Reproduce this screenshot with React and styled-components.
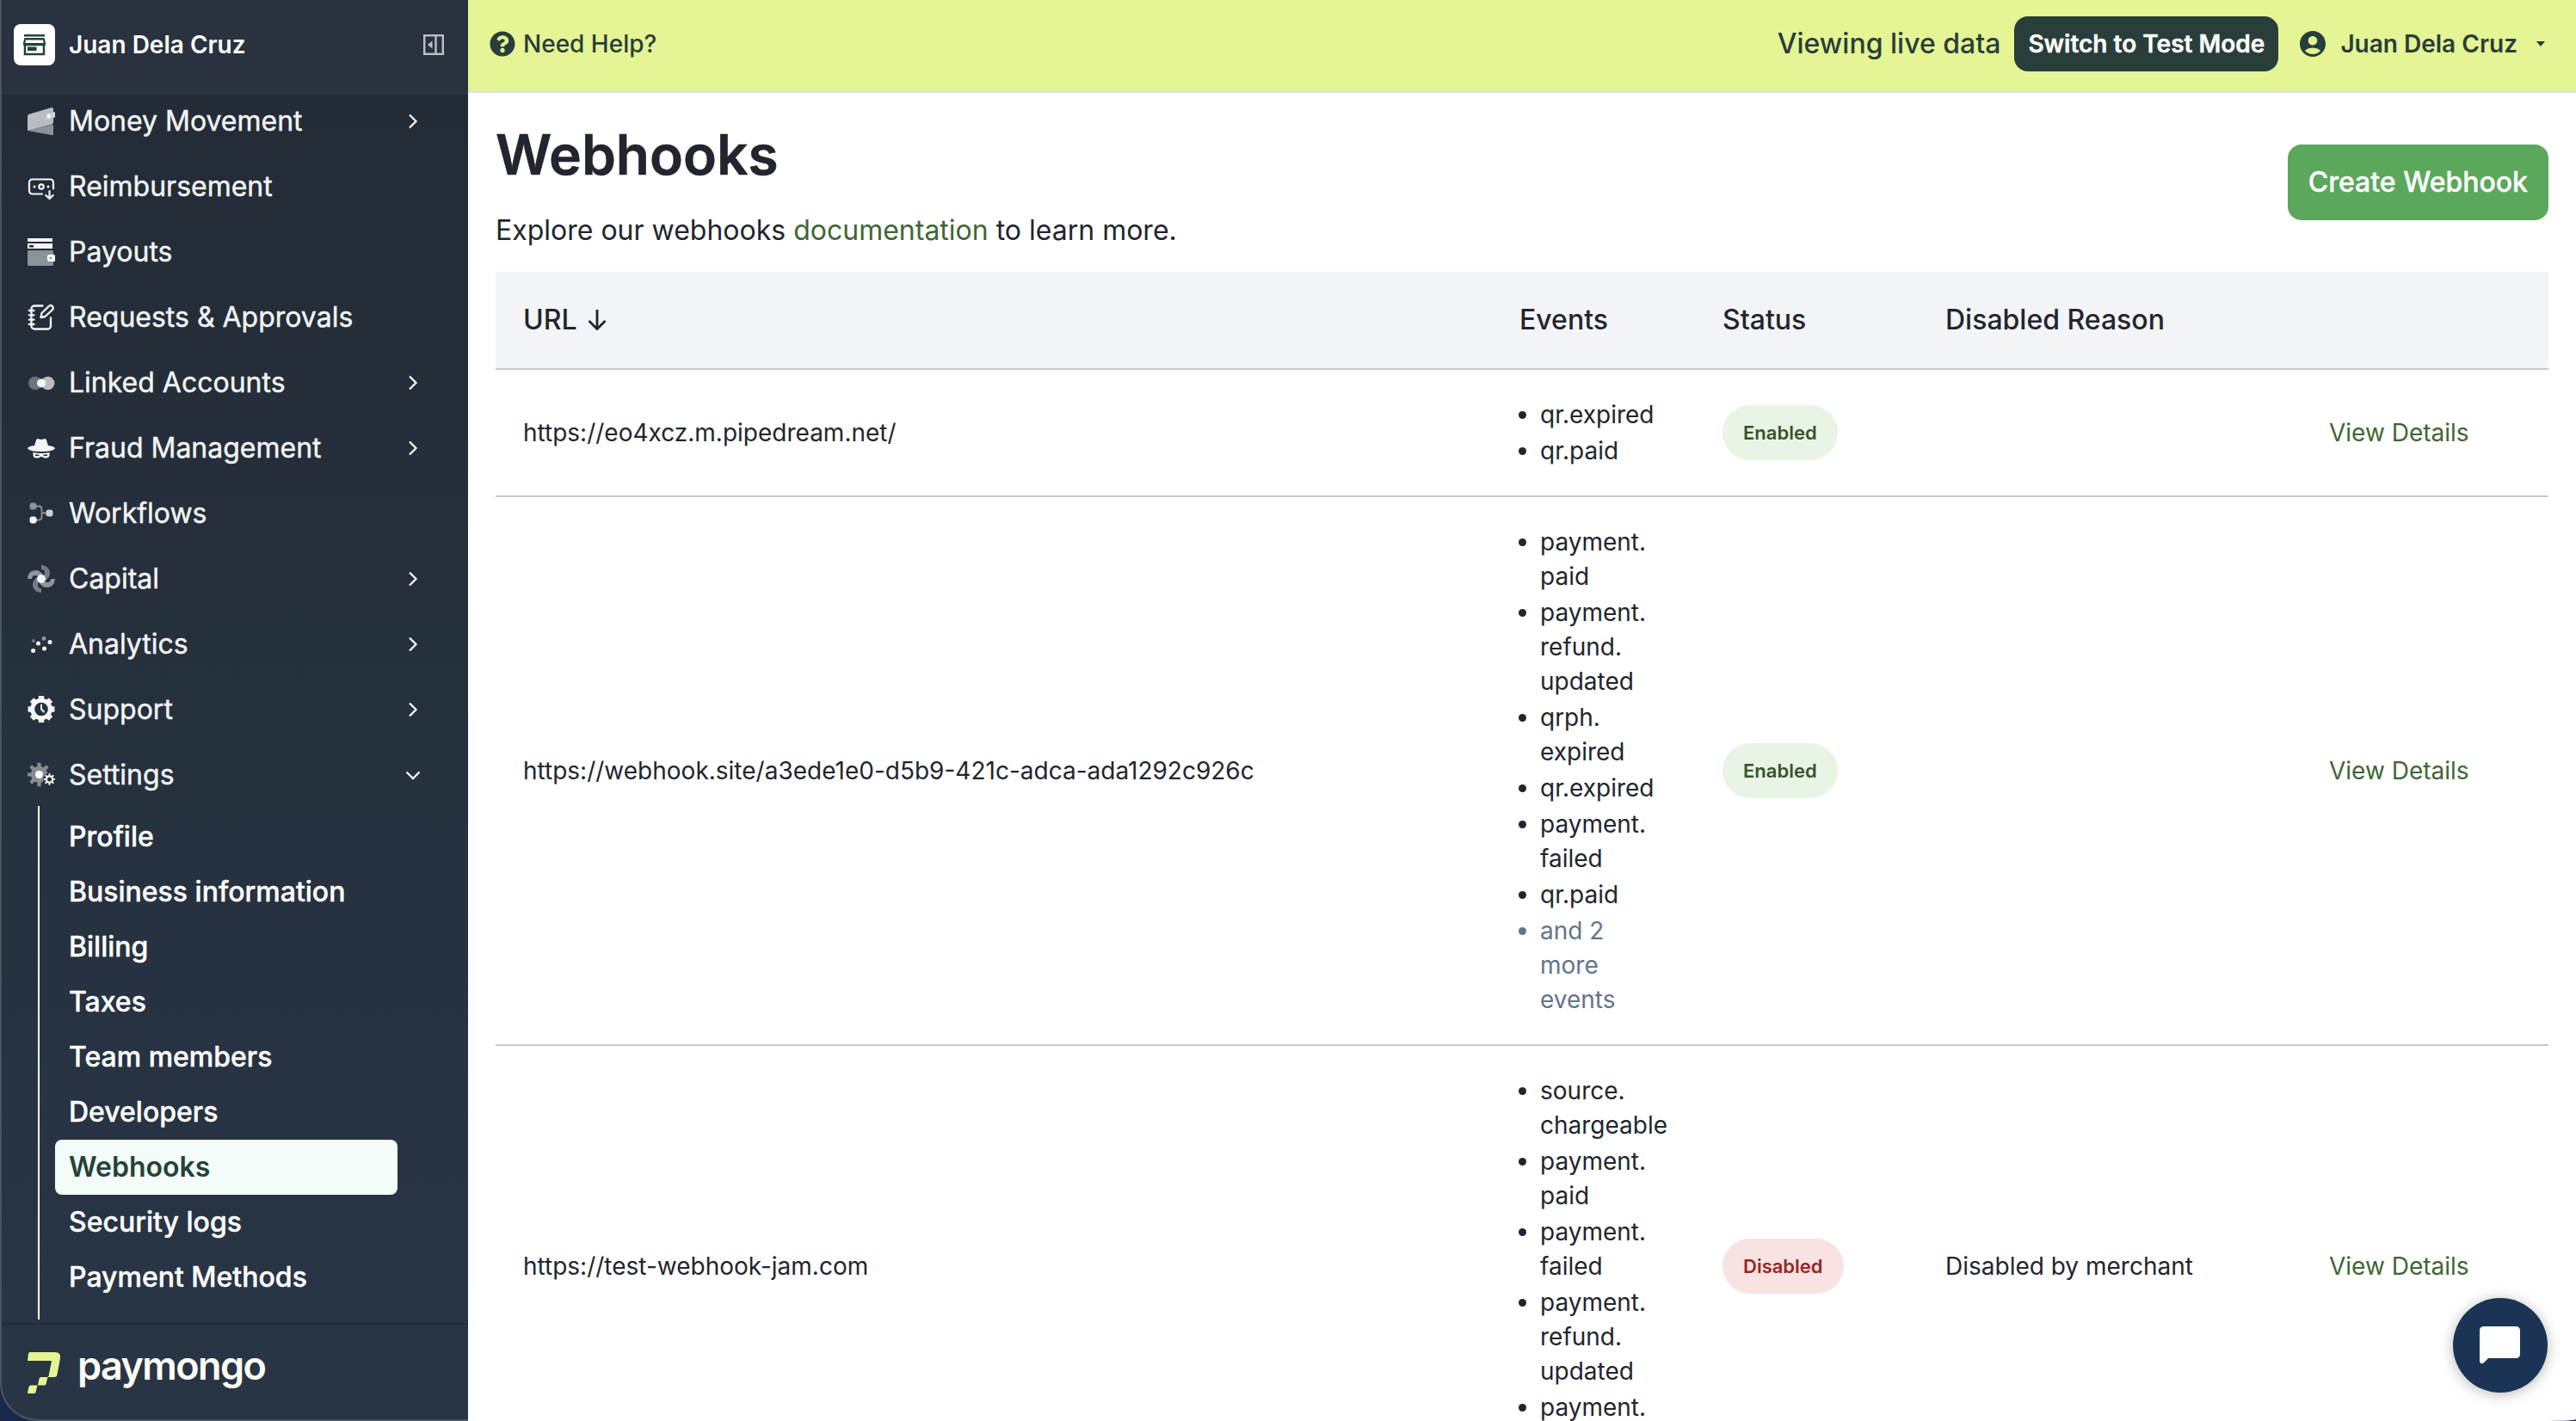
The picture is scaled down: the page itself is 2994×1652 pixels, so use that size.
import React from "react";
import styled, { createGlobalStyle, css } from "styled-components";
import { FaQuestionCircle } from "react-icons/fa";
import { MdAccountCircle } from "react-icons/md";

const GlobalStyle = createGlobalStyle`
  * {
    box-sizing: border-box;
  }
  body {
    margin: 0;
    overflow: hidden;
    background: #17284b;
    color: #22252d;
    font-family: "Inter", "Liberation Sans", sans-serif;
    font-size: 28px;
    line-height: 40px;
  }
`;

const Page = styled.div`
  display: flex;
  width: 2994px;
  height: 1652px;
  overflow: hidden;
`;

/* sidebar */

const Sidebar = styled.aside`
  display: flex;
  flex-direction: column;
  flex: none;
  width: 544px;
  background: linear-gradient(#232c36 110px, #283545 1540px);
  border-left: 2px solid #4a545f;
  border-bottom: 2px solid #4a5661;
  border-bottom-left-radius: 44px;
  overflow: hidden;
`;

const SidebarHeader = styled.div`
  display: flex;
  align-items: center;
  flex: none;
  height: 110px;
  padding: 0 28px 4px 14px;
  background: #29323e;
  border-bottom: 2px solid #2e3844;
  z-index: 1;
`;

const StoreBadge = styled.div`
  display: flex;
  align-items: center;
  justify-content: center;
  width: 48px;
  height: 48px;
  border-radius: 8px;
  background: #fff;
`;

const AccountName = styled.div`
  flex: 1;
  margin-left: 16px;
  color: #fff;
  font-weight: 600;
`;

const Nav = styled.nav`
  flex: 1;
  min-height: 0;
  margin-top: -7px;
`;

const NavRow = styled.div`
  display: flex;
  align-items: center;
  height: 76px;
  padding: 0 54px 0 30px;
  color: #f4f5f7;
  font-size: 32px;
  font-weight: 400;
  -webkit-text-stroke: 0.4px #f4f5f7;
`;

const NavLabel = styled.span`
  flex: 1;
  margin-left: 16px;
`;

const SubNav = styled.div`
  height: 597px;
  margin: -2px 82px 0 42px;
  padding: 4px 0 0 18px;
  border-left: 2px solid #fff;
`;

const SubNavItem = styled.div`
  height: 64px;
  padding: 0 16px;
  border-radius: 8px;
  color: #fff;
  font-size: 32px;
  font-weight: 500;
  line-height: 64px;
  -webkit-text-stroke: 0.4px #fff;
  ${(props) =>
    props.$active &&
    css`
      background: #f3fcf8;
      color: #23423a;
      font-weight: 600;
      -webkit-text-stroke: 0;
    `}
`;

const SidebarFooter = styled.div`
  display: flex;
  flex: none;
  height: 112px;
  padding: 32px 0 0 30px;
  border-top: 2px solid #212a34;
`;

const Wordmark = styled.span`
  margin: -6px 0 0 19px;
  color: #fffdf6;
  font-size: 45px;
  font-weight: 600;
  line-height: 44px;
  letter-spacing: -1.6px;
`;

/* main area */

const Main = styled.main`
  flex: 1;
  min-width: 0;
  background: #fff;
  border-bottom-right-radius: 32px 2px;
  overflow: hidden;
`;

const TopBar = styled.header`
  display: flex;
  align-items: center;
  height: 108px;
  padding: 0 36px 4px 25px;
  background: #e5f494;
  border-bottom: 2px solid #dce2ea;
  color: #283e3a;
`;

const Help = styled.div`
  display: flex;
  align-items: center;
  gap: 9px;
  flex: 1;
  font-weight: 500;
`;

const LiveLabel = styled.span`
  font-size: 32px;
  font-weight: 500;
`;

const ModeButton = styled.button`
  height: 64px;
  margin: 0 22px 0 16px;
  padding: 0 16px;
  border: none;
  border-radius: 16px;
  background: #283e3a;
  color: #fff;
  font: inherit;
  font-weight: 600;
  -webkit-text-stroke: 0.4px #fff;
`;

const UserMenu = styled.div`
  display: flex;
  align-items: center;
  font-weight: 600;

  span {
    margin: 0 22px 0 14px;
  }
`;

const Content = styled.div`
  padding: 0 32px;
`;

const PageHead = styled.div`
  display: flex;
  justify-content: space-between;
  align-items: flex-start;
  height: 208px;
`;

const Title = styled.h1`
  margin: 32px 0 0;
  font-size: 64px;
  font-weight: 600;
  line-height: 80px;
  -webkit-text-stroke: 0.6px #22252d;
`;

const Subtitle = styled.p`
  margin: 24px 0 0;
  font-size: 32px;
  line-height: 48px;
`;

const DocLink = styled.a`
  color: #3f6634;
`;

const CreateButton = styled.button`
  height: 88px;
  margin-top: 60px;
  padding: 0 24px;
  border: none;
  border-radius: 16px;
  background: #5ba75c;
  color: #fff;
  font: inherit;
  font-size: 32px;
  font-weight: 500;
  -webkit-text-stroke: 0.4px #fff;
`;

const TableRow = styled.div`
  display: grid;
  grid-template-columns: 1190px 236px 259px 446px 253px;
  align-items: center;
  padding: 32px 0;
  border-bottom: 2px solid #c1ccd6;
`;

const TableHead = styled(TableRow)`
  height: 114px;
  background: #f3f4f7;
  font-size: 32px;
  font-weight: 500;
`;

const UrlCell = styled.div`
  display: flex;
  align-items: center;
  gap: 11px;
  padding-left: 32px;
`;

const EventList = styled.ul`
  display: grid;
  gap: 2px;
  margin: 0;
  padding-left: 24px;
  width: 190px;
`;

const EventItem = styled.li`
  color: ${(props) => (props.$muted ? "#62748a" : "inherit")};
`;

const Badge = styled.span`
  display: inline-block;
  height: 64px;
  padding: 0 24px;
  border-radius: 32px;
  background: ${(props) => (props.$enabled ? "#e8f5e4" : "#f9e2e2")};
  color: ${(props) => (props.$enabled ? "#37532b" : "#942824")};
  font-size: 22px;
  font-weight: 600;
  line-height: 64px;
`;

const DetailsLink = styled.a`
  color: #3f6634;
`;

const ChatButton = styled.button`
  position: fixed;
  right: 33px;
  bottom: 33px;
  display: flex;
  align-items: center;
  justify-content: center;
  width: 110px;
  height: 110px;
  padding: 0;
  border: none;
  border-radius: 50%;
  background: #1b3354;
  box-shadow: 0 2px 16px rgba(0, 0, 0, 0.28);
`;

/* icons */

const Icon = ({ children, size = 32 }) => (
  <svg width={size} height={size} viewBox={`0 0 ${size} ${size}`} fill="none">
    {children}
  </svg>
);

const Teeth = ({ cx, cy, r, w, fill, top }) =>
  [0, 45, 90, 135, 180, 225, 270, 315].map((a) => (
    <rect
      key={a}
      x={cx - w / 2}
      y={cy - r}
      width={w}
      height={top}
      rx="0.8"
      fill={fill}
      transform={`rotate(${a} ${cx} ${cy})`}
    />
  ));

const MoneyIcon = () => (
  <Icon>
    <path d="M0 27L29 19.5L30 21V31.5L28 32Z" fill="#8b9298" />
    <path d="M0 9.5L1 8L28 0L30 1V18L28 19.5L0 27Z" fill="#b9bdc1" />
    <path d="M22 7.5L32 5V11.5L22 14Z" fill="#d0d3d6" />
    <ellipse cx="24.6" cy="10" rx="1.7" ry="2.4" fill="#fff" />
  </Icon>
);

const ReimbursementIcon = () => (
  <Icon>
    <g stroke="#f4f5f7" strokeWidth="2.2" strokeLinecap="round" strokeLinejoin="round">
      <path d="M17 24.5H5.5A3.500 3.500 0 0 1 2 21V11A3.500 3.500 0 0 1 5.500 7.500H26.500A3.500 3.500 0 0 1 30 11V18.500" />
      <circle cx="16" cy="16" r="2.700" />
      <path d="M25.500 21V30M21.300 26L25.500 30L29.700 26" />
    </g>
    <circle cx="8" cy="16" r="1.500" fill="#f4f5f7" />
    <circle cx="24" cy="16" r="1.500" fill="#f4f5f7" />
  </Icon>
);

const PayoutsIcon = () => (
  <Icon>
    <rect y="0" width="29" height="4" rx="1" fill="#f4f5f7" />
    <path d="M0 6H29V12H0ZM2 8V10.500H7V8Z" fill="#f4f5f7" fillRule="evenodd" />
    <rect y="14" width="30" height="18" rx="1.500" fill="#8b9298" />
    <path d="M25 19H30.500A1.500 1.500 0 0 1 32 20.500V27H25A2 2 0 0 1 23 25V21A2 2 0 0 1 25 19ZM25.800 21.800V24.200H28.200V21.800Z" fill="#fff" fillRule="evenodd" />
  </Icon>
);

const RequestsIcon = () => (
  <Icon>
    <g stroke="#f4f5f7" strokeWidth="2.300" strokeLinecap="round" strokeLinejoin="round">
      <path d="M17.500 2.500H8A3.500 3.500 0 0 0 4.500 6V26A3.500 3.500 0 0 0 8 29.500H23.500A3.500 3.500 0 0 0 27 26V16.500" />
      <path d="M1.800 8H7.500M1.800 13.300H7.500M1.800 18.600H7.500M1.800 24H7.500" />
      <path d="M15.500 16L16.500 11L24.700 3.200A2.700 2.700 0 0 1 29 7L20.500 15Z" />
    </g>
  </Icon>
);

const LinkedIcon = () => (
  <Icon>
    <circle cx="8.800" cy="16.500" r="7.800" fill="#6b737b" />
    <circle cx="23.600" cy="16.500" r="7.800" fill="#b9bdc1" />
    <circle cx="16" cy="16.500" r="5" fill="#f7f8f9" />
  </Icon>
);

const FraudIcon = () => (
  <Icon>
    <path
      d="M8 13L10.300 6Q11.500 4.500 13.500 5.500L16 6.100L18.500 5.500Q20.500 4.500 21.700 6L24 13Q32 14 32 16.500Q29 20 16 20Q3 20 0 16.500Q0 14 8 13Z"
      fill="#f4f5f7"
    />
    <path
      d="M6.500 21Q16 23 25.500 21V25Q24.500 27.500 21.500 27.500Q18 27.500 17 26H15Q14 27.500 10.500 27.500Q7.500 27.500 6.500 25ZM9 23.300V25H13.500V23.800ZM23 23.300V25H18.500V23.800Z"
      fill="#f4f5f7"
      fillRule="evenodd"
    />
  </Icon>
);

const WorkflowsIcon = () => (
  <Icon>
    <path d="M9 7.500H13Q16.500 7.500 16.500 11V20Q16.500 23.500 13 23.500H9M16.500 15.500H22" stroke="#8b9298" strokeWidth="1.800" />
    <rect x="2.500" y="3.500" width="8" height="8" rx="3" fill="#8b9298" />
    <rect x="2.500" y="19.500" width="8" height="8" rx="3" fill="#f7f8f9" />
    <rect x="21.500" y="11.500" width="8" height="8" rx="3" fill="#cdd0d3" />
  </Icon>
);

const CapitalIcon = () => (
  <Icon>
    {[0, 90, 180, 270].map((a) => (
      <path
        key={a}
        d="M16 0C22.500 0.500 26 4 26 9.500C26 13 24 16 21 18L17 14C20 12 20.500 9 19.500 7C18.800 5.500 17.500 5 16 5Z"
        fill={a % 180 ? "#8f959b" : "#747b83"}
        transform={`rotate(${a} 16 16)`}
      />
    ))}
    <circle cx="16" cy="16" r="5" fill="#f4f5f7" />
  </Icon>
);

const AnalyticsIcon = () => (
  <Icon>
    <circle cx="7" cy="12" r="2" fill="#737b83" />
    <circle cx="19" cy="9.300" r="2.500" fill="#8b9298" />
    <g fill="#f7f8f9">
      <circle cx="12.500" cy="15" r="2.500" />
      <circle cx="26" cy="13.600" r="2.500" />
      <circle cx="6.500" cy="23.500" r="2.500" />
      <circle cx="19.500" cy="21" r="2.500" />
    </g>
  </Icon>
);

const SupportIcon = () => (
  <Icon>
    <Teeth cx={16} cy={15.500} r={15.500} w={6.500} top={6} fill="#f4f5f7" />
    <circle cx="16" cy="15.500" r="10.300" stroke="#f4f5f7" strokeWidth="5" />
    <path d="M16 10.500V15.500L19 18.500" stroke="#f4f5f7" strokeWidth="2" strokeLinecap="round" />
  </Icon>
);

const SettingsIcon = () => (
  <Icon>
    <Teeth cx={13.500} cy={15.500} r={13.800} w={4.200} top={6} fill="#868d94" />
    <circle cx="13.500" cy="15.500" r="9.700" fill="#868d94" />
    <circle cx="13.500" cy="15.500" r="4.500" fill="#fff" />
    <circle cx="25.500" cy="21" r="7.500" fill="#25303d" />
    <Teeth cx={25.500} cy={21} r={6.800} w={2.100} top={3} fill="#f4f5f7" />
    <circle cx="25.500" cy="21" r="3.600" stroke="#f4f5f7" strokeWidth="2.200" />
  </Icon>
);

const StoreIcon = () => (
  <Icon size={26}>
    <path d="M1 1H25V3.500H1ZM1.500 5H24.500L26 11V13.500H0V11Z" fill="#23423a" />
    <path d="M3 7.500H23L23.600 11H2.400Z" fill="#fff" />
    <rect x="2" y="13" width="22" height="11" stroke="#23423a" strokeWidth="2.500" />
    <rect x="5" y="15.500" width="10.500" height="4.500" fill="#23423a" />
  </Icon>
);

const CollapseIcon = () => (
  <Icon size={24}>
    <rect x="1.200" y="1.200" width="21.600" height="21.600" stroke="#bcc1c5" strokeWidth="2.400" />
    <path d="M14.500 1V23" stroke="#bcc1c5" strokeWidth="2.400" />
    <path d="M10.500 7.500V16.500L5 12Z" fill="#bcc1c5" />
  </Icon>
);

const Chevron = ({ open }) => (
  <Icon size={20}>
    <path
      d={open ? "M2.500 6.500L10 14L17.500 6.500" : "M6 2.500L13.500 10L6 17.500"}
      stroke="#f4f5f7"
      strokeWidth="2.300"
    />
  </Icon>
);

const SortIcon = () => (
  <Icon size={24}>
    <path d="M12 0V22.500M2.500 13L12 22.500L21.500 13" stroke="#22252d" strokeWidth="2.800" />
  </Icon>
);

const LogoMark = () => (
  <svg width="39" height="48" viewBox="0 0 39 48">
    <path
      d="M2.500 0H32Q39 0 38 7L34.500 26Q34 29 31 29H23L24.500 28L28 10H0L1 2Q1.300 0 2.500 0ZM15.500 29H23.500L21.500 37Q21 38.500 19.500 38.500H12L13.500 31Q14 29 15.500 29ZM4 38.500H11.500L9.500 46.500Q9 48 7.500 48H1Q0 48 0 47L1.500 40.500Q2 38.500 4 38.500Z"
      fill="#e5f492"
    />
  </svg>
);

const menu = [
  { label: "Money Movement", icon: MoneyIcon, expandable: true },
  { label: "Reimbursement", icon: ReimbursementIcon },
  { label: "Payouts", icon: PayoutsIcon },
  { label: "Requests & Approvals", icon: RequestsIcon },
  { label: "Linked Accounts", icon: LinkedIcon, expandable: true },
  { label: "Fraud Management", icon: FraudIcon, expandable: true },
  { label: "Workflows", icon: WorkflowsIcon },
  { label: "Capital", icon: CapitalIcon, expandable: true },
  { label: "Analytics", icon: AnalyticsIcon, expandable: true },
  { label: "Support", icon: SupportIcon, expandable: true },
  { label: "Settings", icon: SettingsIcon, expandable: true, open: true },
];

const settings = [
  "Profile",
  "Business information",
  "Billing",
  "Taxes",
  "Team members",
  "Developers",
  "Webhooks",
  "Security logs",
  "Payment Methods",
];

const webhooks = [
  {
    url: "https://eo4xcz.m.pipedream.net/",
    events: ["qr.expired", "qr.paid"],
    enabled: true,
  },
  {
    url: "https://webhook.site/a3ede1e0-d5b9-421c-adca-ada1292c926c",
    events: [
      "payment. paid",
      "payment. refund. updated",
      "qrph. expired",
      "qr.expired",
      "payment. failed",
      "qr.paid",
    ],
    more: 2,
    enabled: true,
  },
  {
    url: "https://test-webhook-jam.com",
    events: [
      "source. chargeable",
      "payment. paid",
      "payment. failed",
      "payment. refund. updated",
      "payment. refunded",
    ],
    enabled: false,
    reason: "Disabled by merchant",
  },
];

// one segment per line, e.g. "payment." / "paid"
const EventName = ({ name }) =>
  name.split(" ").map((part, i) => (
    <React.Fragment key={i}>
      {i > 0 && <br />}
      {part}
    </React.Fragment>
  ));

const SideMenu = () => (
  <Sidebar>
    <SidebarHeader>
      <StoreBadge>
        <StoreIcon />
      </StoreBadge>
      <AccountName>Juan Dela Cruz</AccountName>
      <CollapseIcon />
    </SidebarHeader>
    <Nav>
      {menu.map(({ label, icon: ItemIcon, expandable, open }) => (
        <NavRow key={label}>
          <ItemIcon />
          <NavLabel>{label}</NavLabel>
          {expandable && <Chevron open={open} />}
        </NavRow>
      ))}
      <SubNav>
        {settings.map((label) => (
          <SubNavItem key={label} $active={label === "Webhooks"}>
            {label}
          </SubNavItem>
        ))}
      </SubNav>
    </Nav>
    <SidebarFooter>
      <LogoMark />
      <Wordmark>paymongo</Wordmark>
    </SidebarFooter>
  </Sidebar>
);

const WebhookRow = ({ hook }) => (
  <TableRow>
    <UrlCell>{hook.url}</UrlCell>
    <EventList>
      {hook.events.map((name) => (
        <EventItem key={name}>
          <EventName name={name} />
        </EventItem>
      ))}
      {hook.more && (
        <EventItem $muted>
          and {hook.more}
          <br />
          more
          <br />
          events
        </EventItem>
      )}
    </EventList>
    <div>
      <Badge $enabled={hook.enabled}>{hook.enabled ? "Enabled" : "Disabled"}</Badge>
    </div>
    <div>{hook.reason}</div>
    <DetailsLink>View Details</DetailsLink>
  </TableRow>
);

const App = () => {
  return (
    <Page>
      <GlobalStyle />
      <SideMenu />
      <Main>
        <TopBar>
          <Help>
            <FaQuestionCircle size={30} />
            Need Help?
          </Help>
          <LiveLabel>Viewing live data</LiveLabel>
          <ModeButton>Switch to Test Mode</ModeButton>
          <UserMenu>
            <MdAccountCircle size={36} />
            <span>Juan Dela Cruz</span>
            <svg width="10" height="6" viewBox="0 0 10 6">
              <path d="M0 0H10L5 6Z" fill="#283e3a" />
            </svg>
          </UserMenu>
        </TopBar>
        <Content>
          <PageHead>
            <div>
              <Title>Webhooks</Title>
              <Subtitle>
                Explore our webhooks <DocLink>documentation</DocLink> to learn more.
              </Subtitle>
            </div>
            <CreateButton>Create Webhook</CreateButton>
          </PageHead>
          <TableHead>
            <UrlCell>
              URL <SortIcon />
            </UrlCell>
            <div>Events</div>
            <div>Status</div>
            <div>Disabled Reason</div>
          </TableHead>
          {webhooks.map((hook) => (
            <WebhookRow key={hook.url} hook={hook} />
          ))}
        </Content>
      </Main>
      <ChatButton aria-label="Open chat">
        <svg width="48" height="44" viewBox="0 0 48 44">
          <path
            d="M5 0H42Q47 0 47 5V32Q47 37 42 37H10L4.500 42.500Q2.500 44 1 42.500Q0 41.500 0 40V5Q0 0 5 0Z"
            fill="#fff"
          />
        </svg>
      </ChatButton>
    </Page>
  );
};

export default App;
